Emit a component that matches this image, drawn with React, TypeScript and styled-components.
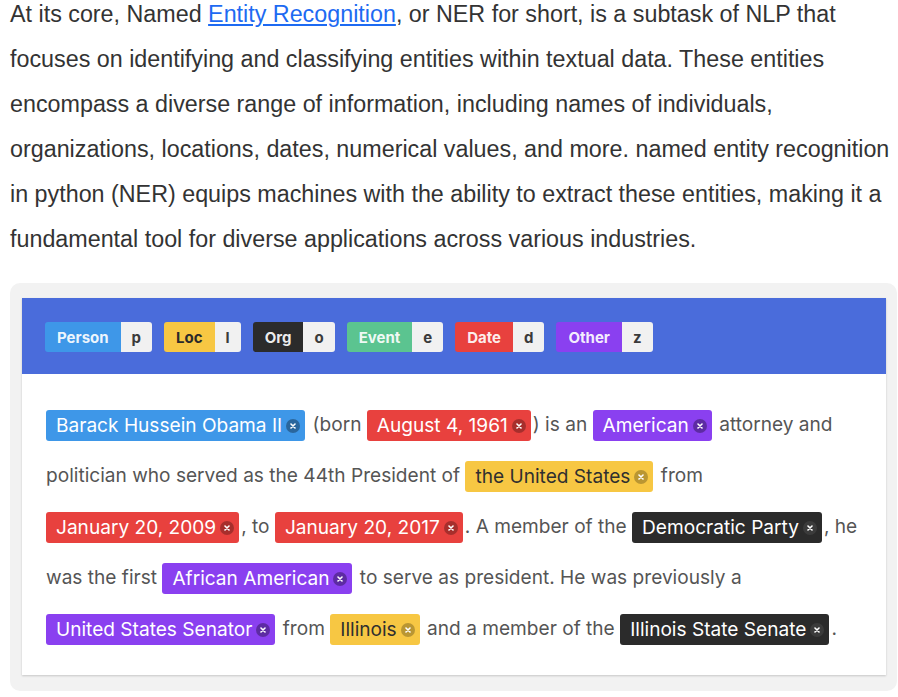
import React from 'react';
import styled, { createGlobalStyle } from 'styled-components';

type Kind = 'person' | 'loc' | 'org' | 'event' | 'date' | 'other';

const palette: Record<Kind, { bg: string; fg: string; dot: string }> = {
  person: { bg: '#3e97e8', fg: '#ffffff', dot: 'rgba(0,0,0,0.32)' },
  loc: { bg: '#f7c743', fg: '#2f2f2f', dot: 'rgba(110,90,30,0.45)' },
  org: { bg: '#2b2b2b', fg: '#ffffff', dot: 'rgba(255,255,255,0.08)' },
  event: { bg: '#5bc490', fg: '#ffffff', dot: 'rgba(0,0,0,0.3)' },
  date: { bg: '#e8413e', fg: '#ffffff', dot: 'rgba(0,0,0,0.28)' },
  other: { bg: '#8a40f0', fg: '#ffffff', dot: 'rgba(0,0,0,0.32)' },
};

const legend: Array<{ kind: Kind; label: string; key: string }> = [
  { kind: 'person', label: 'Person', key: 'p' },
  { kind: 'loc', label: 'Loc', key: 'l' },
  { kind: 'org', label: 'Org', key: 'o' },
  { kind: 'event', label: 'Event', key: 'e' },
  { kind: 'date', label: 'Date', key: 'd' },
  { kind: 'other', label: 'Other', key: 'z' },
];

const Global = createGlobalStyle`
  body {
    margin: 0;
    background: #ffffff;
  }
`;

const Page = styled.div`
  padding: 0 0 0 10px;
  width: 898px;
  box-sizing: border-box;
`;

const Intro = styled.p`
  margin: -8px 0 0;
  font-family: "Liberation Sans", Arial, sans-serif;
  font-size: 23.3px;
  line-height: 45px;
  color: #333333;
  a {
    color: #1d6af2;
    text-decoration: underline;
  }
`;

const Frame = styled.div`
  margin-top: 21px;
  width: 887px;
  box-sizing: border-box;
  background: #f2f2f2;
  border-radius: 10px;
  padding: 15px 11px 16px 12px;
`;

const Card = styled.div`
  background: #ffffff;
  box-shadow: 0 1px 2px rgba(0, 0, 0, 0.18);
  font-family: Inter, "Noto Sans", sans-serif;
`;

const Toolbar = styled.div`
  background: #4a6cdb;
  display: flex;
  gap: 12px;
  padding: 24px 23px 22px;
`;

const LegendTag = styled.div`
  display: flex;
  height: 30px;
  border-radius: 3px;
  overflow: hidden;
  font-size: 15px;
  font-weight: 700;
`;

const LegendLabel = styled.span<{ $kind: Kind }>`
  display: flex;
  align-items: center;
  padding: 0 12px;
  background: ${(p) => palette[p.$kind].bg};
  color: ${(p) => (p.$kind === 'loc' ? '#2a2a2a' : 'rgba(255,255,255,0.92)')};
`;

const LegendKey = styled.span`
  display: flex;
  align-items: center;
  padding: 0 11px;
  background: #f1f1f1;
  color: #3a3a3a;
`;

const Body = styled.div`
  padding: 25px 24px 21px;
  font-size: 19.1px;
  line-height: 51px;
  color: #555555;
`;

const Entity = styled.span<{ $kind: Kind }>`
  display: inline-flex;
  align-items: center;
  height: 31px;
  line-height: 31px;
  padding: 0 5px 0 10px;
  margin: 0 2px 0 0;
  border-radius: 3px;
  background: ${(p) => palette[p.$kind].bg};
  color: ${(p) => palette[p.$kind].fg};
  vertical-align: middle;
`;

const Close = styled.span<{ $kind: Kind }>`
  display: inline-flex;
  align-items: center;
  justify-content: center;
  width: 14px;
  height: 14px;
  margin-left: 4px;
  border-radius: 50%;
  background: ${(p) => palette[p.$kind].dot};
  svg {
    display: block;
  }
`;

function Ent(props: { kind: Kind; children: React.ReactNode }) {
  return (
    <Entity $kind={props.kind}>
      {props.children}
      <Close $kind={props.kind}>
        <svg width="6" height="6" viewBox="0 0 6 6">
          <path d="M1 1L5 5M5 1L1 5" stroke="#ffffff" strokeWidth="1.6" strokeLinecap="round" />
        </svg>
      </Close>
    </Entity>
  );
}

export default function App() {
  return (
    <Page>
      <Global />
      <Intro>
        At its core, Named <a href="#">Entity Recognition</a>, or NER for short, is a subtask of NLP that
        focuses on identifying and classifying entities within textual data. These entities encompass a
        diverse range of information, including names of individuals, organizations, locations, dates,
        numerical values, and more. named entity recognition in python (NER) equips machines with the
        ability to extract these entities, making it a fundamental tool for diverse applications across
        various industries.
      </Intro>
      <Frame>
        <Card>
          <Toolbar>
            {legend.map((l) => (
              <LegendTag key={l.key}>
                <LegendLabel $kind={l.kind}>{l.label}</LegendLabel>
                <LegendKey>{l.key}</LegendKey>
              </LegendTag>
            ))}
          </Toolbar>
          <Body>
            <Ent kind="person">Barack Hussein Obama II</Ent> (born <Ent kind="date">August 4, 1961</Ent>) is
            an <Ent kind="other">American</Ent> attorney and politician who served as the 44th President
            of <Ent kind="loc">the United States</Ent> from <Ent kind="date">January 20, 2009</Ent>, to{' '}
            <Ent kind="date">January 20, 2017</Ent>. A member of the <Ent kind="org">Democratic Party</Ent>,
            he was the first <Ent kind="other">African American</Ent> to serve as president. He was
            previously a <Ent kind="other">United States Senator</Ent> from <Ent kind="loc">Illinois</Ent> and
            a member of the <Ent kind="org">Illinois State Senate</Ent>.
          </Body>
        </Card>
      </Frame>
    </Page>
  );
}
